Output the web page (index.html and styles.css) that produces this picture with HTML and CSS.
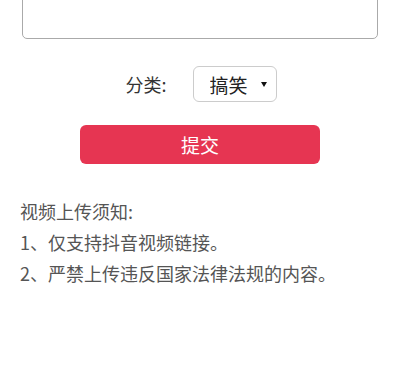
FILE: index.html
```html
<!DOCTYPE html>
<html lang="zh-CN">
<head>
    <meta charset="UTF-8">
    <meta name="viewport" content="width=device-width, initial-scale=1.0">
    <title>视频上传</title>
    <link rel="stylesheet" href="styles.css">
</head>
<body>
    <form class="upload-form">
        <textarea class="link-input" placeholder="粘贴抖音视频链接"></textarea>

        <div class="category-row">
            <label for="category">分类:</label>
            <select id="category" class="category-select">
                <option value="funny" selected>搞笑</option>
                <option value="music">音乐</option>
                <option value="life">生活</option>
            </select>
        </div>

        <button type="button" class="submit-btn">提交</button>
    </form>

    <section class="notice">
        <p>视频上传须知:</p>
        <p>1、仅支持抖音视频链接。</p>
        <p>2、严禁上传违反国家法律法规的内容。</p>
    </section>
</body>
</html>
```

FILE: styles.css
```css
/* Page */
body {
    margin: 0;
    font-family: "Noto Sans CJK SC", "Noto Sans", sans-serif;
    background: #ffffff;
    color: #333;
}

/* Upload form */
.upload-form {
    display: flex;
    flex-direction: column;
    align-items: center;
    padding: 0 22px;
}

.link-input {
    box-sizing: border-box;
    width: 100%;
    height: 110px;
    margin-top: -71px;
    border: 1px solid #aaa;
    border-radius: 5px;
    resize: none;
}

.link-input::placeholder {
    color: transparent;
}

.category-row {
    display: flex;
    align-items: center;
    gap: 26px;
    margin-top: 27px;
    margin-left: 2px;
    font-size: 18px;
}

.category-row label {
    color: #333;
}

.category-select {
    appearance: none;
    -webkit-appearance: none;
    box-sizing: border-box;
    width: 84px;
    height: 36px;
    padding: 0 0 0 16px;
    font-family: inherit;
    font-size: 19px;
    color: #222;
    border: 1px solid #ccc;
    border-radius: 6px;
    background: #fff url("data:image/svg+xml;utf8,<svg xmlns='http://www.w3.org/2000/svg' width='6' height='5'><path d='M0 0h6L3 5z' fill='%23111'/></svg>") no-repeat right 9px center;
}

.submit-btn {
    width: 240px;
    height: 39px;
    margin-top: 23px;
    border: none;
    border-radius: 6px;
    background: #e63552;
    color: #fff;
    font-family: inherit;
    font-size: 19px;
    cursor: pointer;
}

/* Notice text */
.notice {
    padding: 32px 20px 0;
    color: #555;
    font-size: 18px;
    line-height: 31px;
}

.notice p {
    margin: 0;
}
```
